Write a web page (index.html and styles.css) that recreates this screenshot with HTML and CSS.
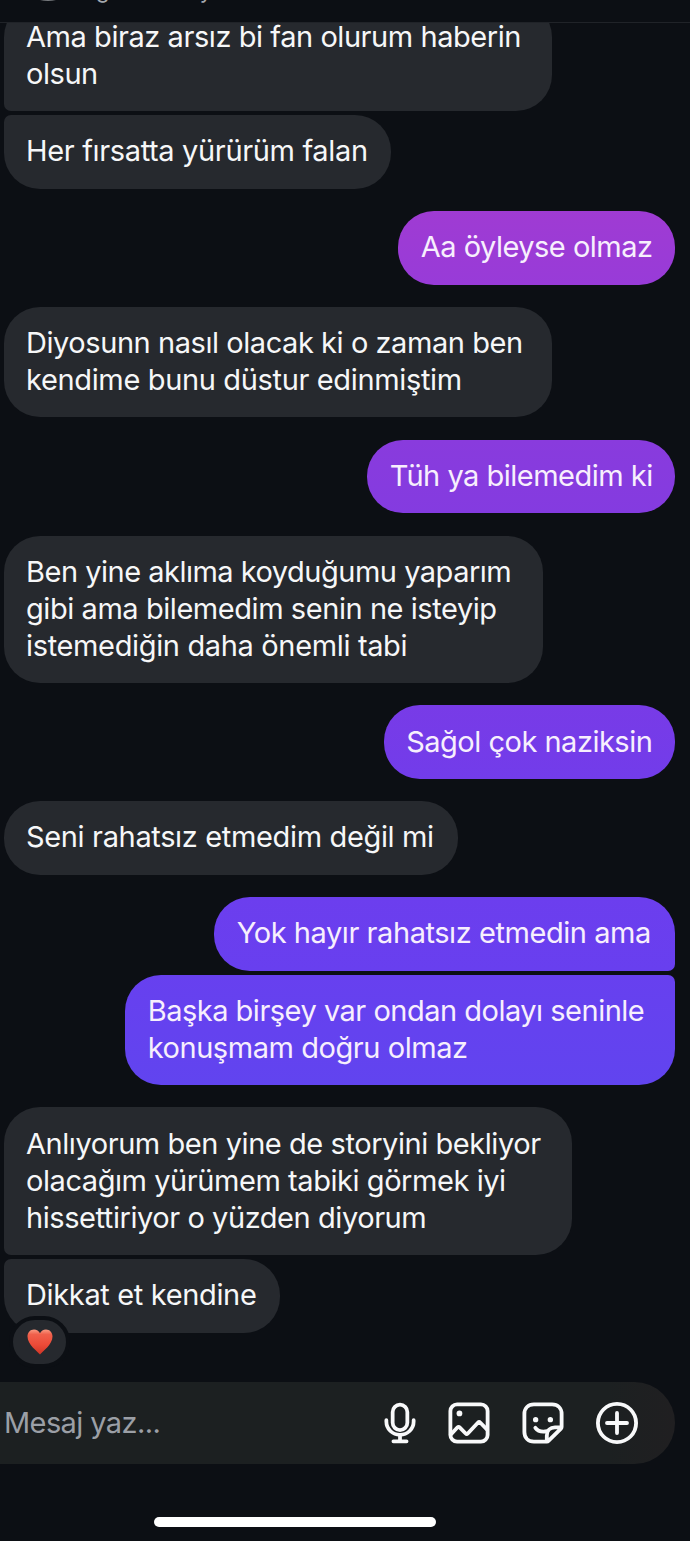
FILE: index.html
```html
<!DOCTYPE html>
<html lang="tr">
<head>
<meta charset="utf-8">
<title>Mesajlar</title>
<link rel="stylesheet" href="styles.css">
</head>
<body>
<main class="screen">
  <header class="header"><span class="avatar"></span><span class="username">agun.blueiay</span></header>
  <section class="chat">
    <div class="bubble in group-start w1"><span class="line">Ama biraz arsız bi fan olurum haberin</span><span class="line">olsun</span></div>
    <div class="bubble in group-end w2"><span class="line loose">Her fırsatta yürürüm falan</span></div>
    <div class="bubble out c1 w3"><span class="line tight">Aa öyleyse olmaz</span></div>
    <div class="bubble in w4"><span class="line">Diyosunn nasıl olacak ki o zaman ben</span><span class="line loose">kendime bunu düstur edinmiştim</span></div>
    <div class="bubble out c2 w5"><span class="line tight">Tüh ya bilemedim ki</span></div>
    <div class="bubble in w6"><span class="line tight">Ben yine aklıma koyduğumu yaparım</span><span class="line">gibi ama bilemedim senin ne isteyip</span><span class="line loose">istemediğin daha önemli tabi</span></div>
    <div class="bubble out c3 w7"><span class="line tight">Sağol çok naziksin</span></div>
    <div class="bubble in w8"><span class="line loose">Seni rahatsız etmedim değil mi</span></div>
    <div class="bubble out group-start c4 w9"><span class="line">Yok hayır rahatsız etmedin ama</span></div>
    <div class="bubble out group-end c5 w10"><span class="line tight">Başka birşey var ondan dolayı seninle</span><span class="line">konuşmam doğru olmaz</span></div>
    <div class="bubble in group-start w11"><span class="line">Anlıyorum ben yine de storyini bekliyor</span><span class="line">olacağım yürümem tabiki görmek iyi</span><span class="line">hissettiriyor o yüzden diyorum</span></div>
    <div class="bubble in group-end w12"><span class="line loose">Dikkat et kendine</span>
      <span class="reaction"><svg width="26" height="26" viewBox="0 0 26 26"><defs><linearGradient id="heart" x1="0" y1="0" x2="0" y2="1"><stop offset="0" stop-color="#f99a82"/><stop offset=".2" stop-color="#f0604b"/><stop offset=".6" stop-color="#ec4b38"/><stop offset="1" stop-color="#cf3526"/></linearGradient></defs><path fill="url(#heart)" d="M13 25.500C10.500 22.500.5 15.500.5 7.500.5 3.300 3.400.5 7 .5c2.700 0 4.900 1.400 6 3.700C14.100 1.900 16.300.5 19 .5c3.600 0 6.500 2.800 6.500 7 0 8-10 15-12.500 18Z"/></svg></span>
    </div>
  </section>
  <footer class="composer">
    <span class="placeholder">Mesaj yaz...</span>
    <span class="icons">
      <svg class="icon" width="32" height="42" viewBox="0 0 34 44"><rect x="9.200" y="2.500" width="15.600" height="27" rx="7.800"/><path d="M2.500 19v1.500c0 8 6.500 14 14.500 14s14.500-6 14.500-14V19M17 34.500v6M10 41.500h14"/></svg>
      <svg class="icon" width="42" height="42" viewBox="0 0 44 44"><rect x="2.500" y="2.500" width="39" height="39" rx="7"/><circle class="dot" cx="12" cy="12" r="3"/><path d="m3 34 7-7.500c.7-.7 1.500-.7 2.200 0l6.300 6.500c.7.700 1.500.7 2.200 0L31.500 21.500c.7-.7 1.500-.7 2.200 0L41 29"/></svg>
      <svg class="icon" width="42" height="42" viewBox="0 0 44 44"><path d="M26 41.500H12.500c-6 0-10-4-10-10v-19c0-6 4-10 10-10h19c6 0 10 4 10 10V26c0 .8-.2 1.300-.7 1.800L28 40.500c-.6.600-1.200 1-2 1ZM26 41.500V35c0-5 3.500-8.500 8.500-8.500h7"/><path d="M14 27c2.500 3.500 6.500 4.800 12.500 3.500"/><circle class="dot" cx="14.300" cy="18.500" r="2.800"/><circle class="dot" cx="29.700" cy="18.500" r="2.800"/></svg>
      <svg class="icon" width="42" height="42" viewBox="0 0 44 44"><circle cx="22" cy="22" r="20"/><path d="M22 11.500v21M11.500 22h21"/></svg>
    </span>
  </footer>
  <div class="home-indicator"></div>
</main>
</body>
</html>
```
FILE: styles.css
```css
* { box-sizing: border-box; }
body { margin: 0; background: #0c0f14; color: #f6f7f8; font-family: Inter, "Noto Sans", sans-serif; }
.screen { width: 690px; height: 1541px; overflow: hidden; display: flex; flex-direction: column; }
.header { height: 23px; flex: none; overflow: hidden; border-bottom: 1px solid #202328; display: flex; align-items: flex-start; padding-left: 16px; gap: 4px; }
.avatar { width: 64px; height: 64px; margin-top: -63px; border-radius: 50%; background: #75787c; }
.username { margin-top: -24px; font-size: 22px; line-height: 28px; letter-spacing: -.4px; color: #a5a8ad; }
.chat { flex: none; height: 1359px; overflow: hidden; display: flex; flex-direction: column; align-items: flex-start; gap: 22.200px; padding: 0 15px 0 4px; }
.bubble { flex: none; position: relative; padding: 18.400px 22px; border-radius: 36px; font-size: 29px; line-height: 36.900px; letter-spacing: -.44px; }
.in { background: #26292e; }
.out { align-self: flex-end; padding-left: 22.700px; color: #f7effd; }
.line { display: block; width: max-content; white-space: nowrap; }
.tight { letter-spacing: -.5px; }
.loose { letter-spacing: -.35px; }
.in.group-start { border-bottom-left-radius: 7px; margin-bottom: -18.200px; }
.in.group-end { border-top-left-radius: 7px; }
.out.group-start { border-bottom-right-radius: 7px; margin-bottom: -18.200px; }
.out.group-end { border-top-right-radius: 7px; }
.c1 { background: linear-gradient(#9f3bd3, #983bd8); }
.c2 { background: linear-gradient(#893bdd, #843be0); }
.c3 { background: linear-gradient(#783be7, #723cea); }
.c4 { background: linear-gradient(#6c3eee, #683fef); }
.c5 { background: linear-gradient(#6740ef, #6144ef); }
.w1 { width: 547.500px; margin-top: -22.500px; }
.w2 { width: 387px; }
.w3 { width: 277px; }
.w4 { width: 548px; }
.w5 { width: 308px; }
.w6 { width: 538.500px; }
.w7 { width: 291.500px; }
.w8 { width: 453.500px; }
.w9 { width: 461px; }
.w10 { width: 550px; }
.w11 { width: 568px; }
.w12 { width: 276px; }
.reaction { position: absolute; left: 5px; top: 57.300px; width: 61px; height: 52px; border: 4px solid #0c0f14; border-radius: 26px; background: #26292e; display: flex; align-items: center; justify-content: center; }
.composer { flex: none; width: 675px; height: 81.500px; border-radius: 0 41px 41px 0; background: linear-gradient(90deg, #1c2021 90%, #201f21); display: flex; align-items: center; justify-content: space-between; padding: 0 37.500px 0 4px; }
.placeholder { font-size: 29px; letter-spacing: -.6px; color: #9b9fa6; }
.icons { display: flex; align-items: center; gap: 32px; }
.icon { fill: none; stroke: #f8f9fa; stroke-width: 4; stroke-linecap: round; stroke-linejoin: round; }
.dot { fill: #f8f9fa; stroke: none; }
.home-indicator { flex: none; width: 282px; height: 10px; border-radius: 5px; background: #fff; margin: 53px 0 0 154px; }
```
